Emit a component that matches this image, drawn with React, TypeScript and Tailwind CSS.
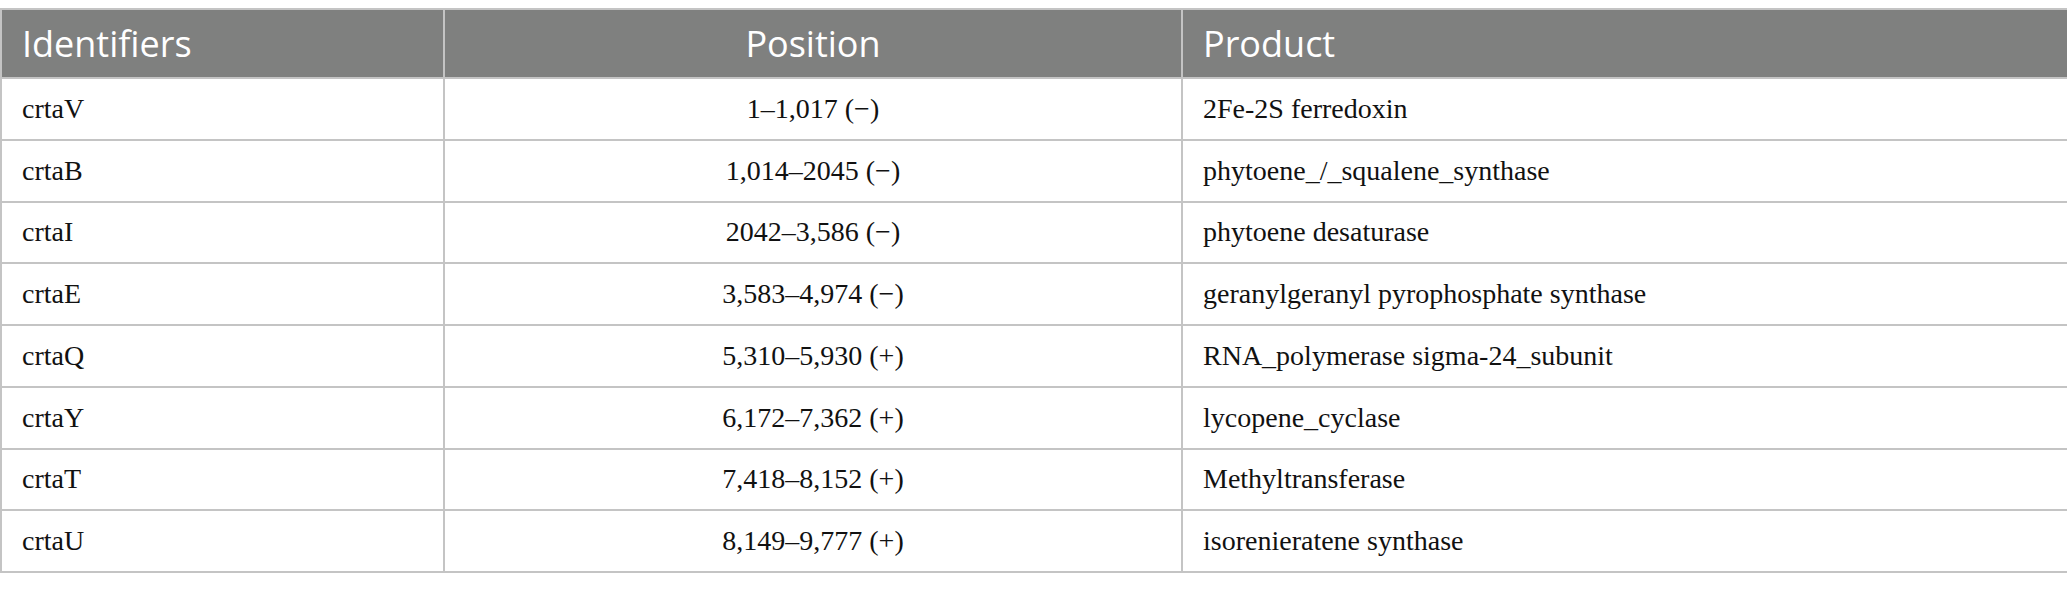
import React from "react";

const rows: [string, string, string][] = [
  ["crtaV", "1–1,017 (−)", "2Fe-2S ferredoxin"],
  ["crtaB", "1,014–2045 (−)", "phytoene_/_squalene_synthase"],
  ["crtaI", "2042–3,586 (−)", "phytoene desaturase"],
  ["crtaE", "3,583–4,974 (−)", "geranylgeranyl pyrophosphate synthase"],
  ["crtaQ", "5,310–5,930 (+)", "RNA_polymerase sigma-24_subunit"],
  ["crtaY", "6,172–7,362 (+)", "lycopene_cyclase"],
  ["crtaT", "7,418–8,152 (+)", "Methyltransferase"],
  ["crtaU", "8,149–9,777 (+)", "isorenieratene synthase"],
];

export default function App() {
  return (
    <div className="w-[2067px] h-[589px] bg-white pt-[8px]">
      <table className="w-[2067px] border-collapse table-fixed">
        <colgroup>
          <col className="w-[443px]" />
          <col className="w-[738px]" />
          <col className="w-[886px]" />
        </colgroup>
        <thead>
          <tr className="h-[69px] bg-[#7f807f] text-white text-[36px] font-['Open_Sans',sans-serif]">
            <th className="border-2 border-[#c4c4c4] font-normal text-left px-[20px]">Identifiers</th>
            <th className="border-2 border-[#c4c4c4] font-normal text-center px-[20px]">Position</th>
            <th className="border-2 border-[#c4c4c4] font-normal text-left px-[20px]">Product</th>
          </tr>
        </thead>
        <tbody className="text-[28px] text-[#111111] font-['Liberation_Serif',serif]">
          {rows.map((r) => (
            <tr key={r[0]} className="h-[61.75px]">
              <td className="border-2 border-[#c4c4c4] px-[20px] text-left">{r[0]}</td>
              <td className="border-2 border-[#c4c4c4] px-[20px] text-center">{r[1]}</td>
              <td className="border-2 border-[#c4c4c4] px-[20px] text-left">{r[2]}</td>
            </tr>
          ))}
        </tbody>
      </table>
    </div>
  );
}
